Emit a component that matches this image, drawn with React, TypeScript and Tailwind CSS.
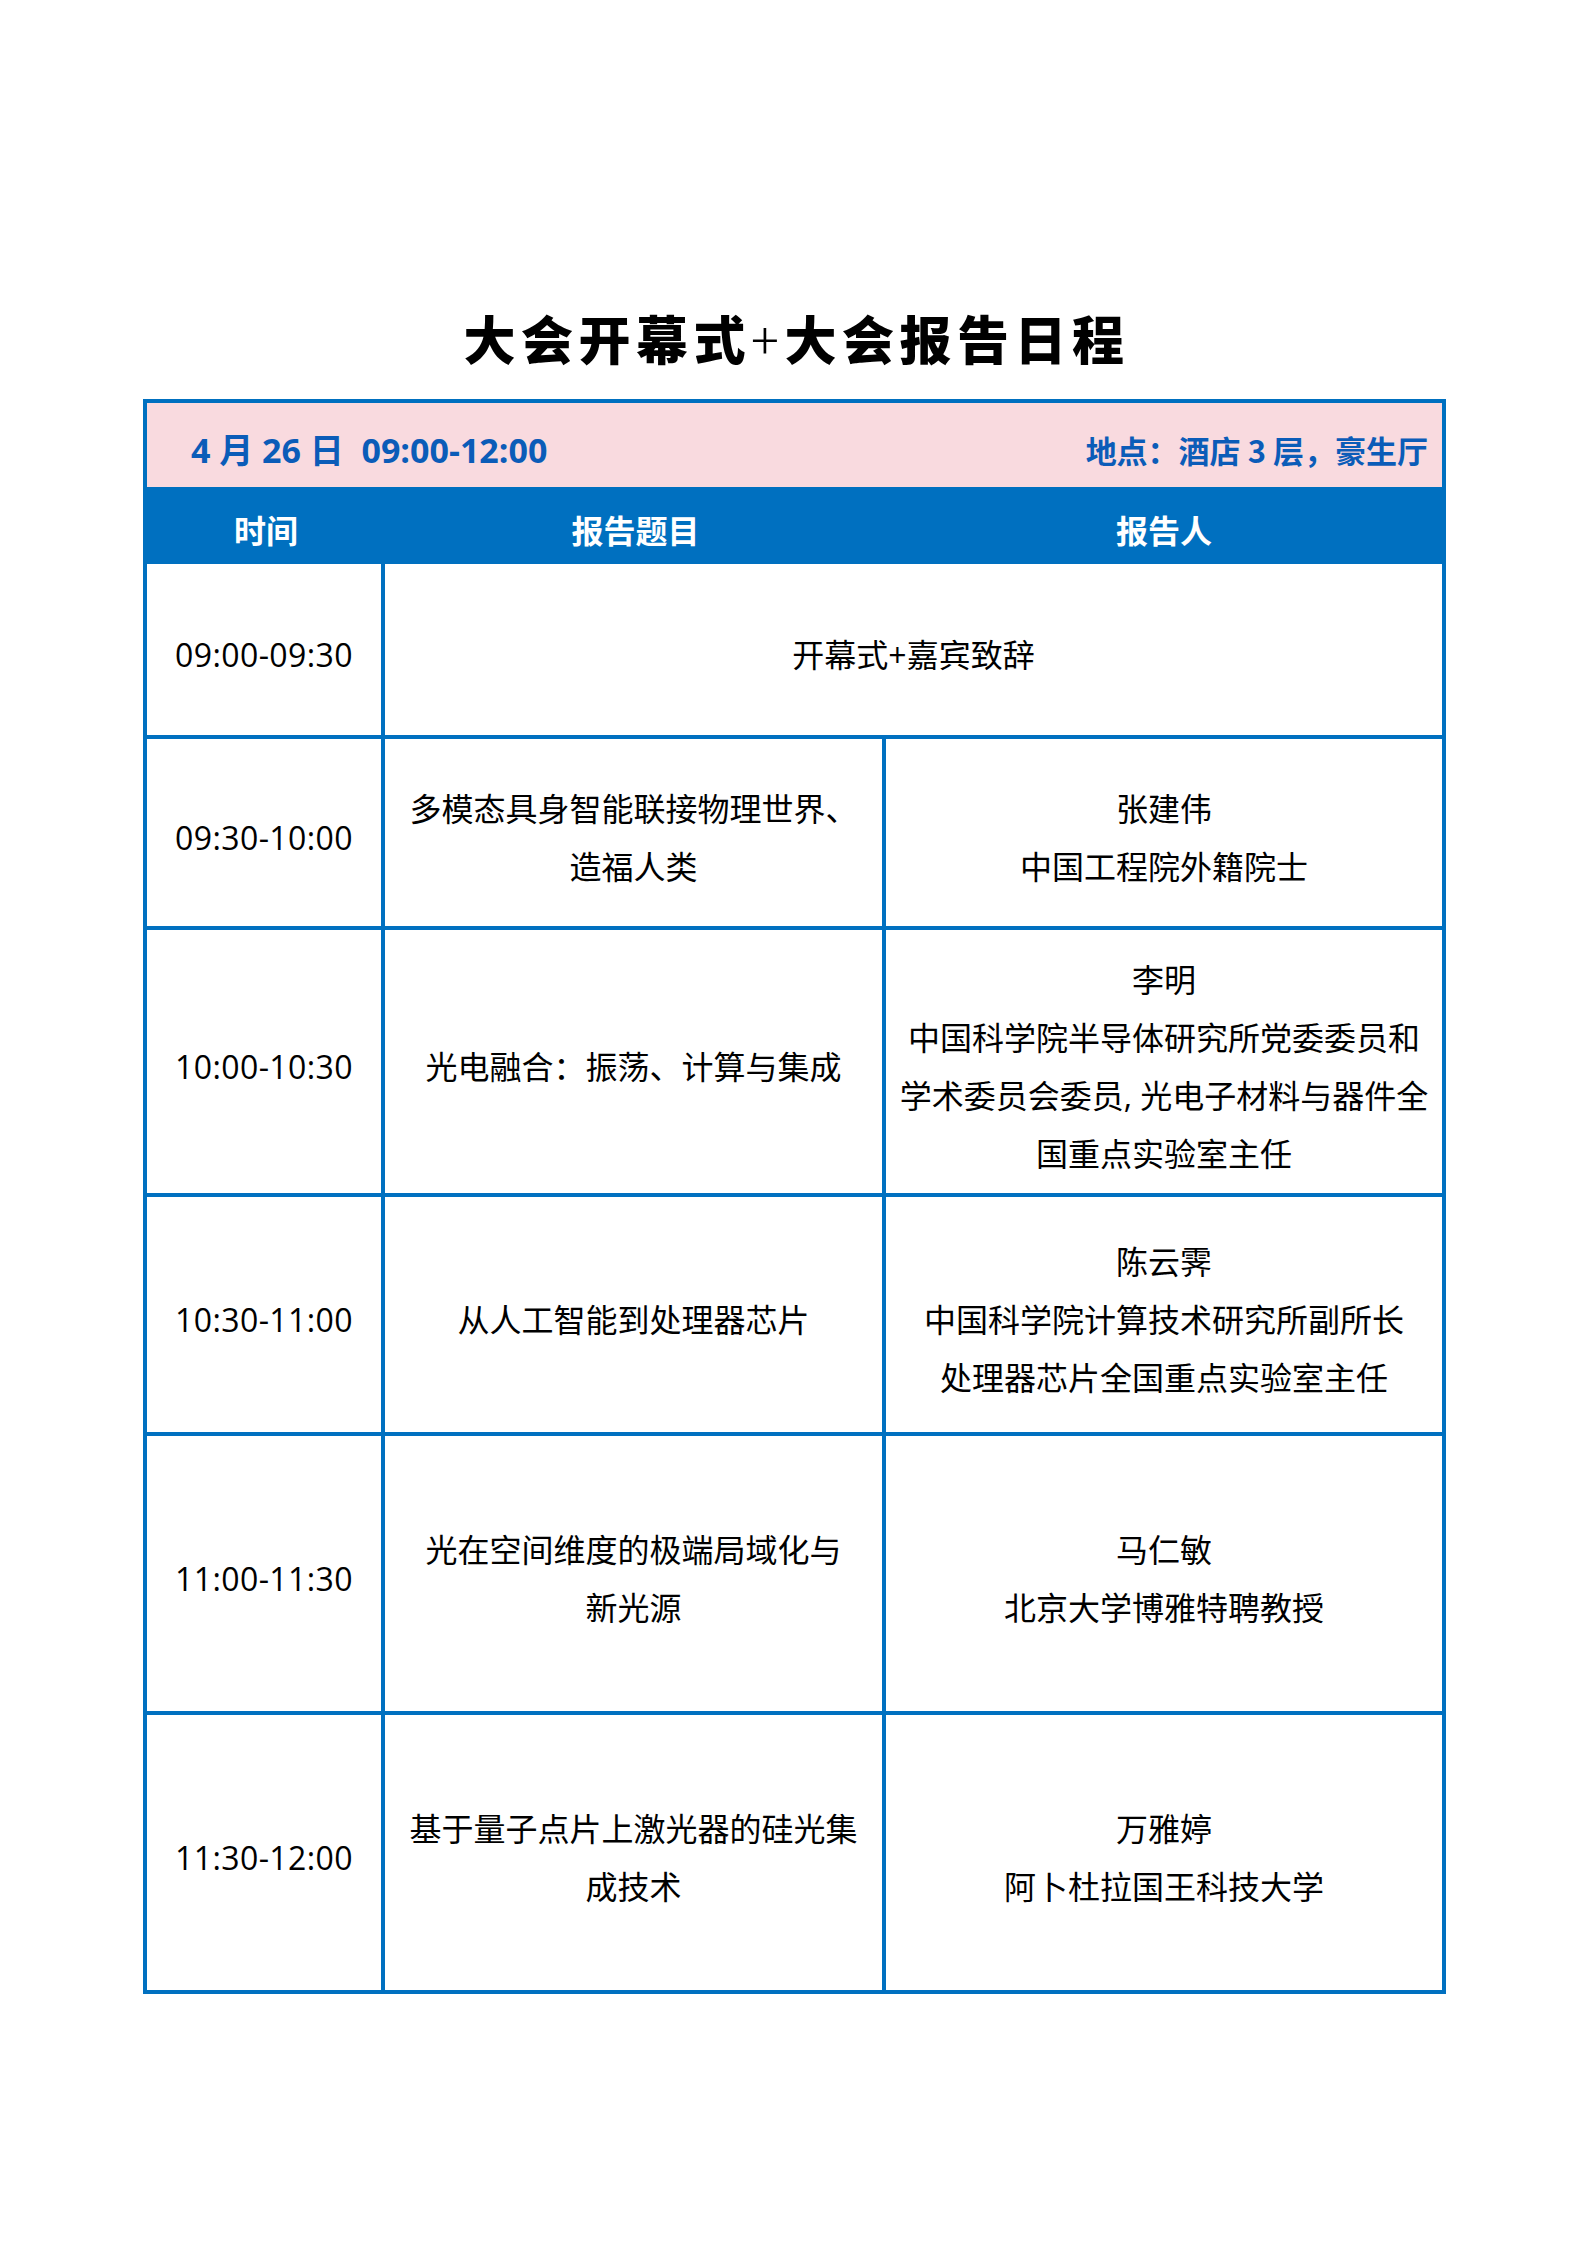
import React from "react";

const BLUE = "border-[#0070c0]";

type Row = {
  time: string;
  h: string;
  title?: string[];
  speaker?: string[];
  merged?: string;
  first?: boolean;
};

const rows: Row[] = [
  { time: "09:00-09:30", h: "h-[171px]", merged: "开幕式+嘉宾致辞", first: true },
  {
    time: "09:30-10:00",
    h: "h-[191px]",
    title: ["多模态具身智能联接物理世界、", "造福人类"],
    speaker: ["张建伟", "中国工程院外籍院士"],
  },
  {
    time: "10:00-10:30",
    h: "h-[267px]",
    title: ["光电融合：振荡、计算与集成"],
    speaker: ["李明", "中国科学院半导体研究所党委委员和", "学术委员会委员, 光电子材料与器件全", "国重点实验室主任"],
  },
  {
    time: "10:30-11:00",
    h: "h-[239px]",
    title: ["从人工智能到处理器芯片"],
    speaker: ["陈云霁", "中国科学院计算技术研究所副所长", "处理器芯片全国重点实验室主任"],
  },
  {
    time: "11:00-11:30",
    h: "h-[279px]",
    title: ["光在空间维度的极端局域化与", "新光源"],
    speaker: ["马仁敏", "北京大学博雅特聘教授"],
  },
  {
    time: "11:30-12:00",
    h: "h-[279px]",
    title: ["基于量子点片上激光器的硅光集", "成技术"],
    speaker: ["万雅婷", "阿卜杜拉国王科技大学"],
  },
];

function Lines({ lines }: { lines: string[] }) {
  return (
    <div className="flex flex-col items-center text-center">
      {lines.map((l, i) => (
        <div key={i} className="whitespace-nowrap leading-[58px]">
          {l}
        </div>
      ))}
    </div>
  );
}

export default function App() {
  return (
    <div
      className="w-[1587px] min-h-[2245px] bg-white text-black"
      style={{ fontFamily: '"Open Sans", "Noto Sans CJK SC", sans-serif' }}
    >
      <div className="pt-[310px] flex justify-center">
        <h1
          className="text-[52px] leading-[56px] font-black tracking-[5.5px] text-black pl-[6px]"
          style={{ fontFamily: '"Noto Sans CJK SC", sans-serif' }}
        >
          大会开幕式<span className="font-light">+</span>大会报告日程
        </h1>
      </div>

      <div className={`mt-[33px] ml-[143px] w-[1303px] border-4 ${BLUE}`}>
        {/* pink info bar */}
        <div className="h-[84px] bg-[#f9dadf] flex items-center justify-between pl-[44px] pr-[14px] pt-[10px] text-[#0b5cb8] font-bold text-[34px]">
          <div className="whitespace-nowrap">
            4 月 26 日&nbsp;&nbsp;09:00-12:00
          </div>
          <div className="whitespace-nowrap text-[31px]" style={{ fontFamily: '"Noto Sans CJK SC", sans-serif' }}>
            地点：酒店 3 层，豪生厅
          </div>
        </div>

        {/* header */}
        <div className="h-[77px] bg-[#0070c0] grid grid-cols-[238px_501px_556px] items-center text-white font-bold text-[32px] pt-[6px]" style={{ fontFamily: '"Noto Sans CJK SC", sans-serif' }}>
          <div className="text-center">时间</div>
          <div className="text-center">报告题目</div>
          <div className="text-center">报告人</div>
        </div>

        {rows.map((r, i) => (
          <div
            key={i}
            className={`grid grid-cols-[238px_501px_556px] text-[32px] ${r.h} ${r.first ? "" : `border-t-4 ${BLUE}`}`}
          >
            <div className={`flex items-center justify-center border-r-4 ${BLUE} pt-[10px]`}>
              <span className="tracking-[0.4px]">{r.time}</span>
            </div>
            {r.merged ? (
              <div className="col-span-2 flex items-center justify-center pt-[10px]">
                {r.merged}
              </div>
            ) : (
              <>
                <div className={`flex items-center justify-center border-r-4 ${BLUE} pt-[10px]`}>
                  <Lines lines={r.title ?? []} />
                </div>
                <div className="flex items-center justify-center pt-[10px]">
                  <Lines lines={r.speaker ?? []} />
                </div>
              </>
            )}
          </div>
        ))}
      </div>
    </div>
  );
}
